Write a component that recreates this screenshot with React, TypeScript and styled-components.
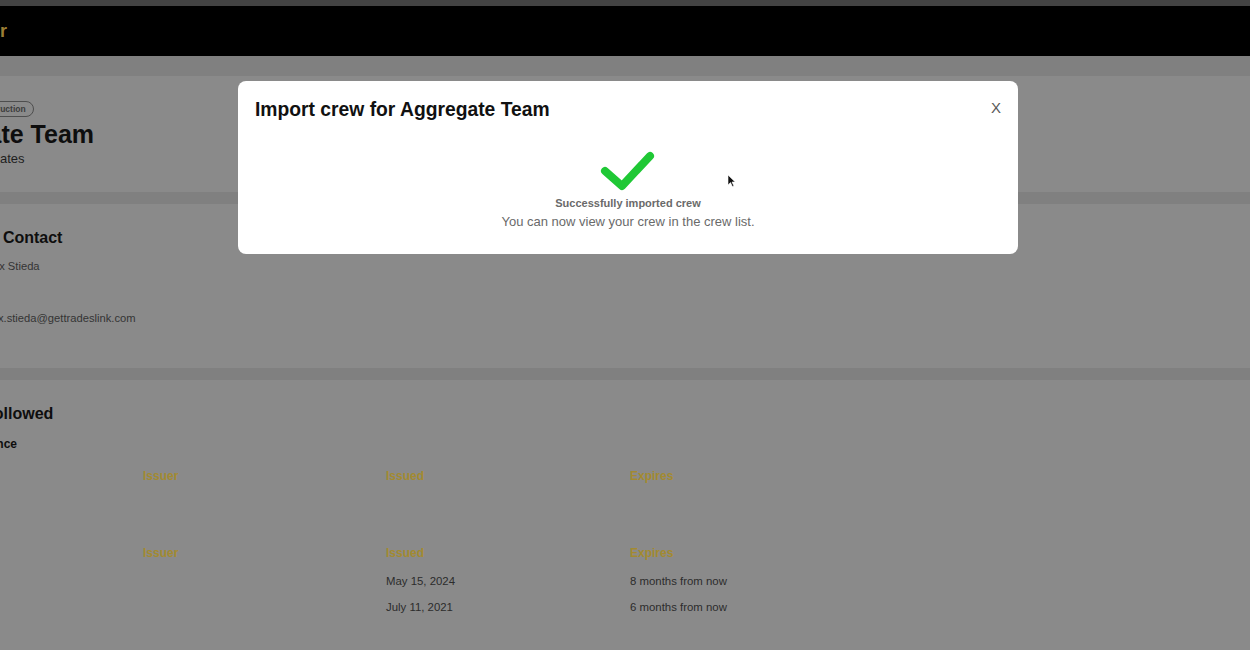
import styled, { createGlobalStyle } from "styled-components";

const GlobalStyle = createGlobalStyle`
    html, body {
        margin: 0;
        padding: 0;
        height: 650px;
        overflow: hidden;
        background: #808080;
        font-family: "Liberation Sans", Arial, sans-serif;
    }
`;

const docs = [
    { issued: "May 15, 2024", expires: "8 months from now" },
    { issued: "July 11, 2021", expires: "6 months from now" },
];

const App = () => {
    return (
        <>
            <GlobalStyle />
            <Page>
                <TopStrip />
                <Header>
                    <Brand>Contractor</Brand>
                </Header>
                <Card $top={25} $bottom={25} $first>
                    <Badges>
                        <Badge>Aggregates</Badge>
                        <Badge>Construction</Badge>
                    </Badges>
                    <TeamName>Aggregate Team</TeamName>
                    <SubTitle>Crushed Aggregates</SubTitle>
                </Card>
                <Card $top={24} $bottom={43}>
                    <SectionTitle $shift={2}>Main Point of Contact</SectionTitle>
                    <ContactGrid>
                        <ContactLabel>Name</ContactLabel>
                        <ContactValue>Alex Stieda</ContactValue>
                        <ContactLabel>Phone</ContactLabel>
                        <ContactValue />
                        <ContactLabel>Email</ContactLabel>
                        <ContactValue>alex.stieda@gettradeslink.com</ContactValue>
                    </ContactGrid>
                </Card>
                <Card $top={24} $bottom={40}>
                    <SectionTitle $shift={0}>Procedures followed</SectionTitle>
                    <SubHeading>Insurance Compliance</SubHeading>
                    <DocTable $gap={18}>
                        <ColHead>Name</ColHead>
                        <ColHead>Issuer</ColHead>
                        <ColHead>Issued</ColHead>
                        <ColHead>Expires</ColHead>
                    </DocTable>
                    <DocTable $gap={61}>
                        <ColHead>Name</ColHead>
                        <ColHead>Issuer</ColHead>
                        <ColHead>Issued</ColHead>
                        <ColHead>Expires</ColHead>
                        {docs.map((d) => (
                            <DocRow key={d.issued}>
                                <Cell />
                                <Cell />
                                <Cell>{d.issued}</Cell>
                                <Cell>{d.expires}</Cell>
                            </DocRow>
                        ))}
                    </DocTable>
                </Card>
            </Page>

            <Backdrop>
                <Modal>
                    <ModalHeader>
                        <ModalTitle>Import crew for Aggregate Team</ModalTitle>
                        <CloseButton>X</CloseButton>
                    </ModalHeader>
                    <ModalBody>
                        <svg width="56" height="42" viewBox="0 0 56 42">
                            <path
                                d="M5 21 L22 36 L50 6"
                                fill="none"
                                stroke="#1fc835"
                                strokeWidth="8"
                                strokeLinecap="round"
                                strokeLinejoin="round"
                            />
                        </svg>
                        <SuccessTitle>Successfully imported crew</SuccessTitle>
                        <SuccessText>You can now view your crew in the crew list.</SuccessText>
                    </ModalBody>
                </Modal>
            </Backdrop>

            <Cursor width="9" height="14" viewBox="0 0 9 14">
                <path d="M1 1 L1 11 L3.5 8.6 L5.4 12.6 L6.9 11.9 L5 8 L8.2 8 Z" fill="#111" stroke="#fff" strokeWidth="0.6" />
            </Cursor>
        </>
    );
};

export default App;

const Page = styled.div`
    margin-left: -124px;
    width: calc(100% + 124px);
    display: flex;
    flex-direction: column;
`;

const TopStrip = styled.div`
    height: 6px;
    background: #434343;
`;

const Header = styled.header`
    height: 50px;
    background: #000;
    display: flex;
    align-items: center;
    padding-left: 39px;
`;

const Brand = styled.span`
    color: #9c7e34;
    font-size: 18px;
    font-weight: 700;
    margin-top: 1px;
`;

const Card = styled.section<{ $top: number; $bottom: number; $first?: boolean }>`
    background: #8a8a8a;
    margin-top: ${(p) => (p.$first ? 20 : 12)}px;
    padding: ${(p) => p.$top}px 20px ${(p) => p.$bottom}px 20px;
    display: flex;
    flex-direction: column;
`;

const Badges = styled.div`
    display: flex;
    gap: 6px;
`;

const Badge = styled.span`
    border: 1px solid #4e4e4e;
    border-radius: 8px;
    padding: 0 7px;
    height: 14px;
    line-height: 14px;
    font-size: 8.5px;
    font-weight: 700;
    color: #3c3c3c;
`;

const TeamName = styled.h1`
    margin: 2px 0 0 4px;
    font-size: 25px;
    line-height: 30px;
    font-weight: 700;
    color: #0e0e0e;
`;

const SubTitle = styled.div`
    margin: 2px 0 0 10px;
    font-size: 13px;
    line-height: 16px;
    color: #1e1e1e;
`;

const SectionTitle = styled.h2<{ $shift: number }>`
    margin: 0 0 0 ${(p) => p.$shift}px;
    font-size: 16px;
    line-height: 20px;
    font-weight: 700;
    color: #0e0e0e;
`;

const ContactGrid = styled.div`
    margin-top: 11px;
    display: grid;
    grid-template-columns: 87px 1fr;
    grid-auto-rows: 14px;
    row-gap: 12px;
    font-size: 11.2px;
    line-height: 14px;
`;

const ContactLabel = styled.div`
    color: #333;
`;

const ContactValue = styled.div`
    color: #343434;
`;

const SubHeading = styled.h3`
    margin: 13px 0 0 -7px;
    font-size: 12px;
    line-height: 14px;
    font-weight: 700;
    color: #0e0e0e;
`;

const DocTable = styled.div<{ $gap: number }>`
    margin-top: ${(p) => p.$gap}px;
    display: grid;
    grid-template-columns: 247px 243px 244px 1fr;
    row-gap: 12px;
`;

const ColHead = styled.div`
    font-size: 12px;
    line-height: 14px;
    font-weight: 700;
    color: #a38a30;
    margin-bottom: 2px;
`;

const DocRow = styled.div`
    display: contents;
`;

const Cell = styled.div`
    font-size: 11.4px;
    line-height: 14px;
    color: #2c2c2c;
`;

const Backdrop = styled.div`
    position: fixed;
    inset: 0;
    display: flex;
    align-items: flex-start;
    padding: 81px 0 0 238px;
`;

const Modal = styled.div`
    width: 780px;
    background: #fff;
    border-radius: 8px;
    box-sizing: border-box;
    padding: 17px 17px 24px 17px;
    display: flex;
    flex-direction: column;
`;

const ModalHeader = styled.div`
    display: flex;
    justify-content: space-between;
    align-items: center;
    height: 24px;
`;

const ModalTitle = styled.h2`
    margin: 0;
    font-size: 19.3px;
    font-weight: 700;
    color: #111;
`;

const CloseButton = styled.button`
    border: none;
    background: none;
    padding: 0;
    margin-top: -5px;
    font-family: "Liberation Sans", Arial, sans-serif;
    font-size: 15px;
    color: #5a5a5a;
    cursor: pointer;
`;

const ModalBody = styled.div`
    margin-top: 28px;
    display: flex;
    flex-direction: column;
    align-items: center;
`;

const SuccessTitle = styled.div`
    margin-top: 4px;
    font-size: 11px;
    line-height: 14px;
    font-weight: 700;
    color: #6a6a6a;
`;

const SuccessText = styled.div`
    margin-top: 4px;
    font-size: 13px;
    line-height: 16px;
    color: #6a6a6a;
`;

const Cursor = styled.svg`
    position: fixed;
    left: 727px;
    top: 174px;
`;
